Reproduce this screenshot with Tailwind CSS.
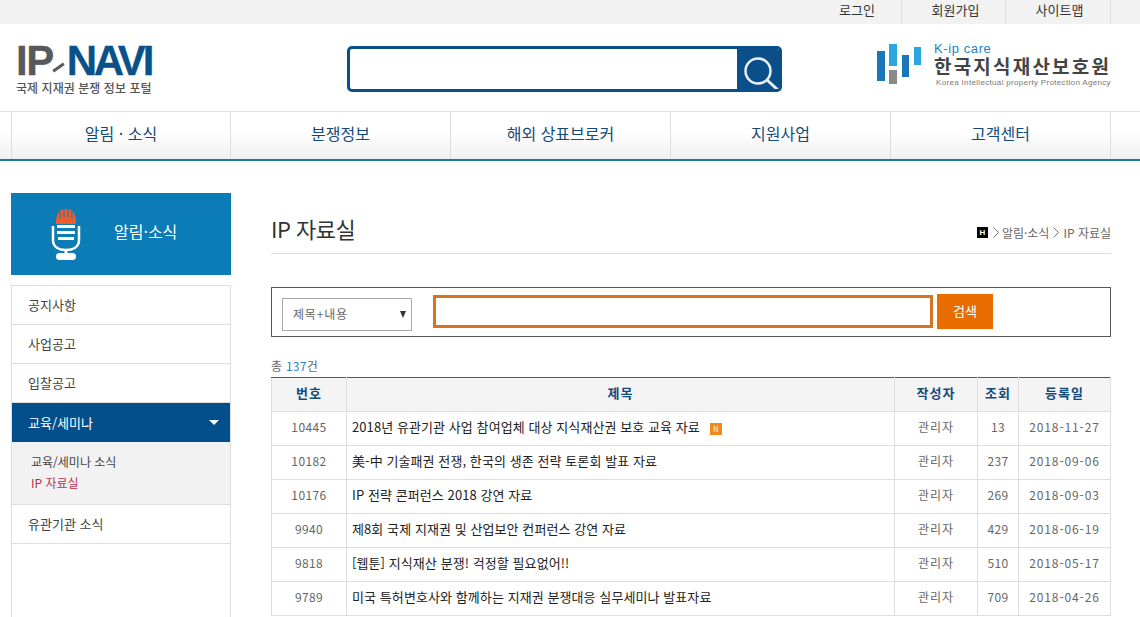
<!DOCTYPE html>
<html lang="ko">
<head>
    <meta charset="UTF-8">
    <title>IP 자료실</title>
    <script src="https://cdn.jsdelivr.net/npm/@tailwindcss/browser@4"></script>
</head>
<body class="h-[617px] overflow-hidden bg-white text-[#333] font-['Noto_Sans_CJK_KR','Liberation_Sans',sans-serif]">

    <!-- Top bar -->
    <div class="h-6 bg-[#f2f2f2]">
        <ul class="flex justify-end h-6 pr-[29px] text-[13px] text-[#333]">
            <li class="w-[90px] pr-[26px] text-right leading-[19px]">로그인</li>
            <li class="w-[104px] pl-1 text-center leading-[19px] border-l border-[#ddd]">회원가입</li>
            <li class="w-[106px] pl-[3px] text-center leading-[19px] border-x border-[#ddd]">사이트맵</li>
        </ul>
    </div>

    <!-- Header -->
    <header class="h-[87px] flex items-start border-b border-[#ddd] box-content">
        <div class="w-[347px] pl-4 pt-[18px] shrink-0">
            <div class="flex items-center h-[38px] font-['Liberation_Sans',sans-serif] font-bold text-[42px] leading-none [-webkit-text-stroke:0.3px_currentColor]">
                <span class="text-[#58595b] tracking-[-1.5px]">IP</span>
                <span class="w-[13px] h-[3px] bg-[#58595b] -rotate-[35deg] mt-3 -ml-px mr-[2px]"></span>
                <span class="text-[#0a5189] tracking-[-3.2px]">NAVI</span>
            </div>
            <p class="text-xs leading-none font-medium text-[#555] mt-[2px] tracking-[0.05px] whitespace-nowrap">국제 지재권 분쟁 정보 포털</p>
        </div>
        <div class="w-[435px] h-[46px] mt-[22px] flex rounded-[5px] border-[3px] border-[#0a4f8a] bg-white overflow-hidden shrink-0">
            <div class="flex-1"></div>
            <div class="w-[42px] bg-[#0a4f8a] flex items-center justify-center">
                <svg width="42" height="43" viewBox="1 0 42 43" fill="none" stroke="#e8f0f6">
                    <circle cx="22" cy="23" r="12.5" stroke-width="2.5"/>
                    <path d="M31 32l11 10" stroke-width="3"/>
                </svg>
            </div>
        </div>
        <div class="ml-[95px] mt-5 flex shrink-0">
            <svg width="46" height="42" viewBox="0 0 46 42">
                <rect x="0" y="7" width="8" height="30" fill="#1a76b8"/>
                <rect x="12" y="0" width="8" height="22" fill="#2ba6e0"/>
                <rect x="12" y="26" width="8" height="14" fill="#8a8a8a"/>
                <rect x="25" y="11" width="7" height="22" fill="#1a76b8"/>
                <rect x="37" y="3" width="7" height="18" fill="#2ba6e0"/>
            </svg>
            <div class="ml-[11px] -mt-px">
                <p class="text-[13px] leading-3 text-[#2a7fc0] tracking-[0.6px] font-['Liberation_Sans',sans-serif]">K-ip care</p>
                <p class="text-[19px] leading-[21px] font-bold text-[#444] tracking-[2.2px] whitespace-nowrap">한국지식재산보호원</p>
                <p class="text-[8px] ml-[2px] mt-px leading-3 text-[#777] tracking-[0.33px] whitespace-nowrap font-['Liberation_Sans',sans-serif]">Korea Intellectual property Protection Agency</p>
            </div>
        </div>
    </header>

    <!-- Main nav -->
    <nav class="h-[49px] border-b-2 border-[#1a7a9e] bg-gradient-to-b from-white from-40% to-[#f0f0f0]">
        <ul class="flex ml-[11px] w-[1100px] h-full border-r border-[#ddd] text-base text-[#124a7c]">
            <li class="w-[219px] pb-[5px] flex items-center justify-center border-l border-[#ddd]">알림 · 소식</li>
            <li class="w-[220px] pb-[5px] flex items-center justify-center border-l border-[#ddd]">분쟁정보</li>
            <li class="w-[220px] pb-[5px] flex items-center justify-center border-l border-[#ddd]">해외 상표브로커</li>
            <li class="w-[220px] pb-[5px] flex items-center justify-center border-l border-[#ddd]">지원사업</li>
            <li class="w-[220px] pb-[5px] flex items-center justify-center border-l border-[#ddd]">고객센터</li>
        </ul>
    </nav>

    <div class="flex pl-[11px] pt-8">
        <!-- Sidebar -->
        <aside class="w-[220px] shrink-0">
            <div class="h-[82px] bg-[#0b7cb6] flex items-center">
                <svg width="30" height="54" viewBox="0 0 30 54" class="ml-10" fill="none">
                    <path d="M5 17c0-9 2-15 10-15s10 6 10 15z" fill="#f15a29"/>
                    <path d="M9 4v8M13 2v8M17 2v8M21 4v8" stroke="#0b7cb6" stroke-width="1"/>
                    <path d="M6 18h18v3H6zM6 24h18v3H6zM7 30h16v3H7z" fill="#fff"/>
                    <path d="M2 19v14c0 7 6 10 13 10s13-3 13-10V19" stroke="#fff" stroke-width="2.5"/>
                    <path d="M15 42v5" stroke="#fff" stroke-width="3"/>
                    <rect x="5" y="46" width="20" height="7" rx="3.5" fill="#fff"/>
                </svg>
                <span class="ml-[33px] pb-[7px] text-base text-white">알림·소식</span>
            </div>
            <ul class="mt-[10px] border border-[#ddd] border-b-0 text-[13px] text-[#444]">
                <li class="h-[39px] flex items-center pl-4 border-b border-[#ddd]">공지사항</li>
                <li class="h-[39px] flex items-center pl-4 border-b border-[#ddd]">사업공고</li>
                <li class="h-[39px] flex items-center pl-4 border-b border-[#ddd]">입찰공고</li>
                <li class="h-[39px] flex items-center justify-between pl-4 pr-[11px] bg-[#034f8c] text-white">
                    교육/세미나
                    <span class="w-0 h-0 border-x-[5px] border-x-transparent border-t-[5px] border-t-white"></span>
                </li>
                <li class="h-[63px] pt-[9px] pl-[19px] bg-[#f2f2f2] border-b border-[#ddd] text-xs leading-[21px]">
                    <p class="text-[#444]">교육/세미나 소식</p>
                    <p class="text-[#b3354d]">IP 자료실</p>
                </li>
                <li class="h-[39px] flex items-center pl-4 border-b border-[#ddd]">유관기관 소식</li>
                <li class="h-20"></li>
            </ul>
        </aside>

        <!-- Content -->
        <main class="w-[840px] ml-10 shrink-0">
            <div class="h-[61px] flex items-center justify-between border-b border-[#ddd] pt-[11px]">
                <h2 class="text-[22px] text-[#333] font-normal tracking-[-0.5px] -mt-px">IP 자료실</h2>
                <div class="flex items-center mt-2 text-xs text-[#666]">
                    <span class="w-[11px] h-[11px] bg-black text-white text-[8px] font-bold leading-[11px] text-center mr-[5px] font-['Liberation_Sans',sans-serif]">H</span>
                    <svg width="6" height="11" viewBox="0 0 6 11" fill="none" stroke="#777" class="mr-[3px]"><path d="M.5.5l5 5-5 5"/></svg>
                    <span>알림·소식</span>
                    <svg width="6" height="11" viewBox="0 0 6 11" fill="none" stroke="#777" class="mx-1"><path d="M.5.5l5 5-5 5"/></svg>
                    <span>IP 자료실</span>
                </div>
            </div>

            <!-- Search form -->
            <div class="mt-[33px] h-[50px] pb-[2px] border border-[#555] flex items-center pl-[10px]">
                <div class="w-[130px] h-[33px] mt-[6px] border border-[#aaa] flex items-center justify-between pl-[10px] pr-[5px] text-xs text-[#666] tracking-[0.8px]">
                    제목+내용
                    <span class="w-0 h-0 border-x-[3.5px] border-x-transparent border-t-[7px] border-t-[#333]"></span>
                </div>
                <div class="w-[500px] h-[33px] ml-[21px] border-[3px] border-[#d9731e]"></div>
                <div class="w-[56px] h-[35px] ml-1 bg-[#e86c00] text-white text-[13px] flex items-center justify-center">검색</div>
            </div>

            <p class="mt-[19px] h-[21px] text-xs leading-[19px] text-[#666] tracking-[0.25px]">총 <span class="text-[#2a84c4]">137</span>건</p>

            <!-- Board table -->
            <table class="w-[840px] table-fixed border-collapse text-xs text-[#666] text-center [&_td]:pb-1 [&_th]:pb-1">
                <thead>
                    <tr class="h-[34px] bg-[#f4f4f4] text-[13px] font-bold text-[#124a7c] tracking-[1px]">
                        <th class="w-[75px] border border-[#ddd] border-t-[#555]">번호</th>
                        <th class="border border-[#ddd] border-t-[#555]">제목</th>
                        <th class="w-[83px] border border-[#ddd] border-t-[#555]">작성자</th>
                        <th class="w-[41px] border border-[#ddd] border-t-[#555]">조회</th>
                        <th class="w-[92px] border border-[#ddd] border-t-[#555]">등록일</th>
                    </tr>
                </thead>
                <tbody>
                    <tr class="h-[34px]">
                        <td class="border border-[#ddd] tracking-[0.4px]">10445</td>
                        <td class="border border-[#ddd] text-left pl-[5px] text-[13px] text-[#222] tracking-[0.08px]">2018년 유관기관 사업 참여업체 대상 지식재산권 보호 교육 자료<span class="inline-block w-3 h-3 ml-[10px] bg-[#f08a1d] text-white text-[7px] leading-3 text-center align-[0px]">N</span></td>
                        <td class="border border-[#ddd] tracking-[1px]">관리자</td>
                        <td class="border border-[#ddd] tracking-[0.4px]">13</td>
                        <td class="border border-[#ddd] tracking-[0.9px]">2018-11-27</td>
                    </tr>
                    <tr class="h-[34px]">
                        <td class="border border-[#ddd] tracking-[0.4px]">10182</td>
                        <td class="border border-[#ddd] text-left pl-[5px] text-[13px] text-[#222] tracking-[0.08px]">美-中 기술패권 전쟁, 한국의 생존 전략 토론회 발표 자료</td>
                        <td class="border border-[#ddd] tracking-[1px]">관리자</td>
                        <td class="border border-[#ddd] tracking-[0.4px]">237</td>
                        <td class="border border-[#ddd] tracking-[0.9px]">2018-09-06</td>
                    </tr>
                    <tr class="h-[34px]">
                        <td class="border border-[#ddd] tracking-[0.4px]">10176</td>
                        <td class="border border-[#ddd] text-left pl-[5px] text-[13px] text-[#222] tracking-[0.08px]">IP 전략 콘퍼런스 2018 강연 자료</td>
                        <td class="border border-[#ddd] tracking-[1px]">관리자</td>
                        <td class="border border-[#ddd] tracking-[0.4px]">269</td>
                        <td class="border border-[#ddd] tracking-[0.9px]">2018-09-03</td>
                    </tr>
                    <tr class="h-[34px]">
                        <td class="border border-[#ddd] tracking-[0.4px]">9940</td>
                        <td class="border border-[#ddd] text-left pl-[5px] text-[13px] text-[#222] tracking-[0.08px]">제8회 국제 지재권 및 산업보안 컨퍼런스 강연 자료</td>
                        <td class="border border-[#ddd] tracking-[1px]">관리자</td>
                        <td class="border border-[#ddd] tracking-[0.4px]">429</td>
                        <td class="border border-[#ddd] tracking-[0.9px]">2018-06-19</td>
                    </tr>
                    <tr class="h-[34px]">
                        <td class="border border-[#ddd] tracking-[0.4px]">9818</td>
                        <td class="border border-[#ddd] text-left pl-[5px] text-[13px] text-[#222] tracking-[0.08px]">[웹툰] 지식재산 분쟁! 걱정할 필요없어!!</td>
                        <td class="border border-[#ddd] tracking-[1px]">관리자</td>
                        <td class="border border-[#ddd] tracking-[0.4px]">510</td>
                        <td class="border border-[#ddd] tracking-[0.9px]">2018-05-17</td>
                    </tr>
                    <tr class="h-[34px]">
                        <td class="border border-[#ddd] tracking-[0.4px]">9789</td>
                        <td class="border border-[#ddd] text-left pl-[5px] text-[13px] text-[#222] tracking-[0.08px]">미국 특허변호사와 함께하는 지재권 분쟁대응 실무세미나 발표자료</td>
                        <td class="border border-[#ddd] tracking-[1px]">관리자</td>
                        <td class="border border-[#ddd] tracking-[0.4px]">709</td>
                        <td class="border border-[#ddd] tracking-[0.9px]">2018-04-26</td>
                    </tr>
                </tbody>
            </table>
        </main>
    </div>
</body>
</html>
